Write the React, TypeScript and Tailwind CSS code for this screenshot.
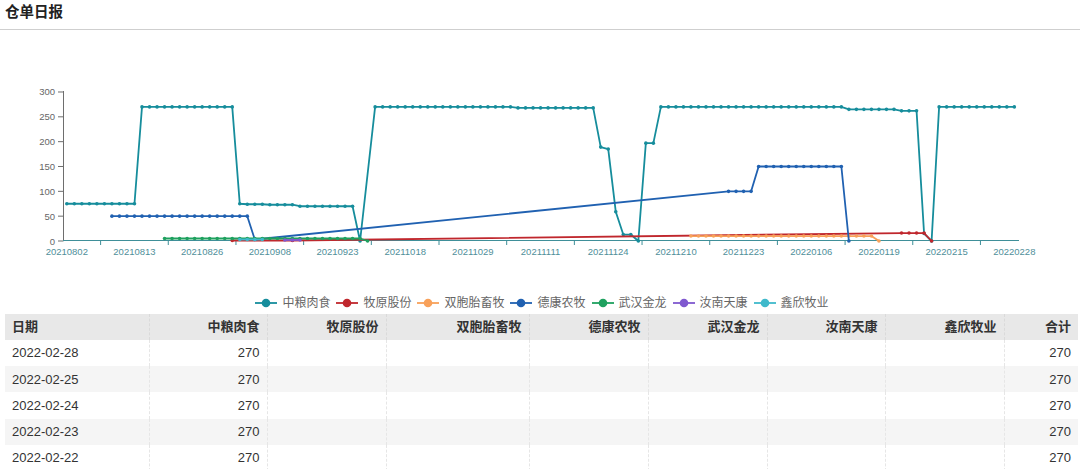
const X = (i: number) => 66.8 + 7.52 * i
const Y = (v: number) => 241 - v * 0.4967

type Pt = [number, number]

const run = (from: number, to: number, v: number): Pt[] => {
  const out: Pt[] = []
  for (let i = from; i <= to; i++) out.push([i, v])
  return out
}

const SERIES: { name: string; color: string; pts: Pt[] }[] = [
  {
    name: '中粮肉食',
    color: '#168d9c',
    pts: [
      ...run(0, 9, 75),
      ...run(10, 22, 270),
      [23, 75],
      ...run(24, 26, 74),
      ...run(27, 30, 73),
      ...run(31, 38, 70),
      [39, 0],
      ...run(41, 59, 270),
      ...run(60, 70, 268),
      [71, 189],
      [72, 185],
      [73, 59],
      [74, 13],
      [75, 13],
      [76, 0],
      [77, 197],
      [78, 197],
      ...run(79, 103, 270),
      ...run(104, 110, 265),
      ...run(111, 113, 262),
      [114, 15],
      [115, 0],
      ...run(116, 126, 270),
    ],
  },
  {
    name: '牧原股份',
    color: '#c0272d',
    pts: [[22, 1], [30, 1], ...run(111, 114, 16), [115, 0]],
  },
  {
    name: '双胞胎畜牧',
    color: '#f8a15a',
    pts: [...run(83, 107, 10), [108, 0]],
  },
  {
    name: '德康农牧',
    color: '#2061b1',
    pts: [...run(6, 24, 50), [25, 3], ...run(88, 91, 100), ...run(92, 103, 150), [104, 0]],
  },
  {
    name: '武汉金龙',
    color: '#1fa15f',
    pts: [...run(13, 39, 5), [40, 0]],
  },
  {
    name: '汝南天康',
    color: '#7f58cf',
    pts: run(29, 31, 2),
  },
  {
    name: '鑫欣牧业',
    color: '#3fb9cb',
    pts: run(23, 26, 3),
  },
]

const X_LABELS = [
  '20210802', '20210813', '20210826', '20210908', '20210923',
  '20211018', '20211029', '20211111', '20211124', '20211210',
  '20211223', '20220106', '20220119', '20220215', '20220228',
]

const Y_TICKS = [0, 50, 100, 150, 200, 250, 300]

const COLS = [
  { label: '日期', w: 144, align: 'left' },
  { label: '中粮肉食', w: 118, align: 'right' },
  { label: '牧原股份', w: 119, align: 'right' },
  { label: '双胞胎畜牧', w: 143, align: 'right' },
  { label: '德康农牧', w: 119, align: 'right' },
  { label: '武汉金龙', w: 119, align: 'right' },
  { label: '汝南天康', w: 118, align: 'right' },
  { label: '鑫欣牧业', w: 119, align: 'right' },
  { label: '合计', w: 74, align: 'right' },
]

const ROWS = ['2022-02-28', '2022-02-25', '2022-02-24', '2022-02-23', '2022-02-22']

function Chart() {
  return (
    <svg width={1080} height={262} viewBox="0 30 1080 262" className="block">
      {/* y axis */}
      <line x1={63.5} y1={91} x2={63.5} y2={241} stroke="#6e6e6e" strokeWidth={1} />
      {Y_TICKS.map((t) => (
        <g key={t}>
          <line x1={58} y1={Y(t)} x2={63.5} y2={Y(t)} stroke="#6e6e6e" strokeWidth={1} />
          <text x={55} y={Y(t) + 3.5} fontSize={9.5} fill="#666" textAnchor="end" fontFamily="'Liberation Sans', sans-serif">
            {t}
          </text>
        </g>
      ))}
      {/* x axis */}
      <line x1={63} y1={240.5} x2={1019} y2={240.5} stroke="#3f8f99" strokeWidth={1} />
      {Array.from({ length: 14 }, (_, k) => 63 + 7.52 * (5 + 9 * k)).map((x) => (
        <line key={x} x1={x} y1={240.5} x2={x} y2={245} stroke="#3f8f99" strokeWidth={1} />
      ))}
      {X_LABELS.map((l, k) => (
        <text
          key={l}
          x={X(9 * k)}
          y={255}
          fontSize={9.5}
          fill="#4f8f9a"
          textAnchor="middle"
          fontFamily="'Liberation Sans', sans-serif"
        >
          {l}
        </text>
      ))}
      {SERIES.map((s) => (
        <g key={s.name}>
          <polyline
            points={s.pts.map(([i, v]) => `${X(i)},${Y(v)}`).join(' ')}
            fill="none"
            stroke={s.color}
            strokeWidth={1.8}
            strokeLinejoin="round"
          />
          {s.pts.map(([i, v]) => (
            <circle key={i} cx={X(i)} cy={Y(v)} r={1.8} fill={s.color} />
          ))}
        </g>
      ))}
    </svg>
  )
}

function Legend() {
  return (
    <div className="mt-[1px] flex h-[20px] items-center justify-center gap-[6px] pl-[4px]">
      {SERIES.map((s) => (
        <div key={s.name} className="flex items-center gap-[5px]">
          <svg width={22} height={10} className="block">
            <line x1={0} y1={5} x2={22} y2={5} stroke={s.color} strokeWidth={1.8} />
            <circle cx={11} cy={5} r={4.3} fill={s.color} />
          </svg>
          <span className="text-[12px] leading-none text-[#666]">{s.name}</span>
        </div>
      ))}
    </div>
  )
}

export default function App() {
  return (
    <div
      className="h-[469px] w-[1080px] overflow-hidden bg-white text-[#333]"
      style={{ fontFamily: "'Liberation Sans', 'Noto Sans CJK SC', sans-serif" }}
    >
      <div className="flex h-[30px] items-center border-b border-[#cfcfcf] pl-[5px] pb-[3px]">
        <span className="text-[14.5px] font-bold text-[#222]">仓单日报</span>
      </div>
      <Chart />
      <Legend />
      <div className="mt-[1px] pl-[5px] pr-[2px]">
        <table className="w-[1073px] table-fixed border-collapse text-[13px]">
          <colgroup>
            {COLS.map((c) => (
              <col key={c.label} style={{ width: c.w }} />
            ))}
          </colgroup>
          <thead>
            <tr className="h-[26px] bg-[#e8e8e8]">
              {COLS.map((c, ci) => (
                <th
                  key={c.label}
                  className={`px-[7px] font-bold text-[#333] ${c.align === 'left' ? 'text-left' : 'text-right'} ${
                    ci < COLS.length - 1 ? 'border-r border-dashed border-[#dadada]' : ''
                  }`}
                >
                  {c.label}
                </th>
              ))}
            </tr>
          </thead>
          <tbody>
            {ROWS.map((d, ri) => (
              <tr key={d} className={`h-[26.2px] ${ri % 2 === 1 ? 'bg-[#f5f5f5]' : 'bg-white'}`}>
                {COLS.map((c, ci) => {
                  const val = ci === 0 ? d : ci === 1 || ci === COLS.length - 1 ? '270' : ''
                  return (
                    <td
                      key={c.label}
                      className={`px-[7px] font-normal text-[#333] ${c.align === 'left' ? 'text-left' : 'text-right'} ${
                        ci < COLS.length - 1 ? 'border-r border-dashed border-[#e6e6e6]' : ''
                      }`}
                    >
                      {val}
                    </td>
                  )
                })}
              </tr>
            ))}
          </tbody>
        </table>
      </div>
    </div>
  )
}
